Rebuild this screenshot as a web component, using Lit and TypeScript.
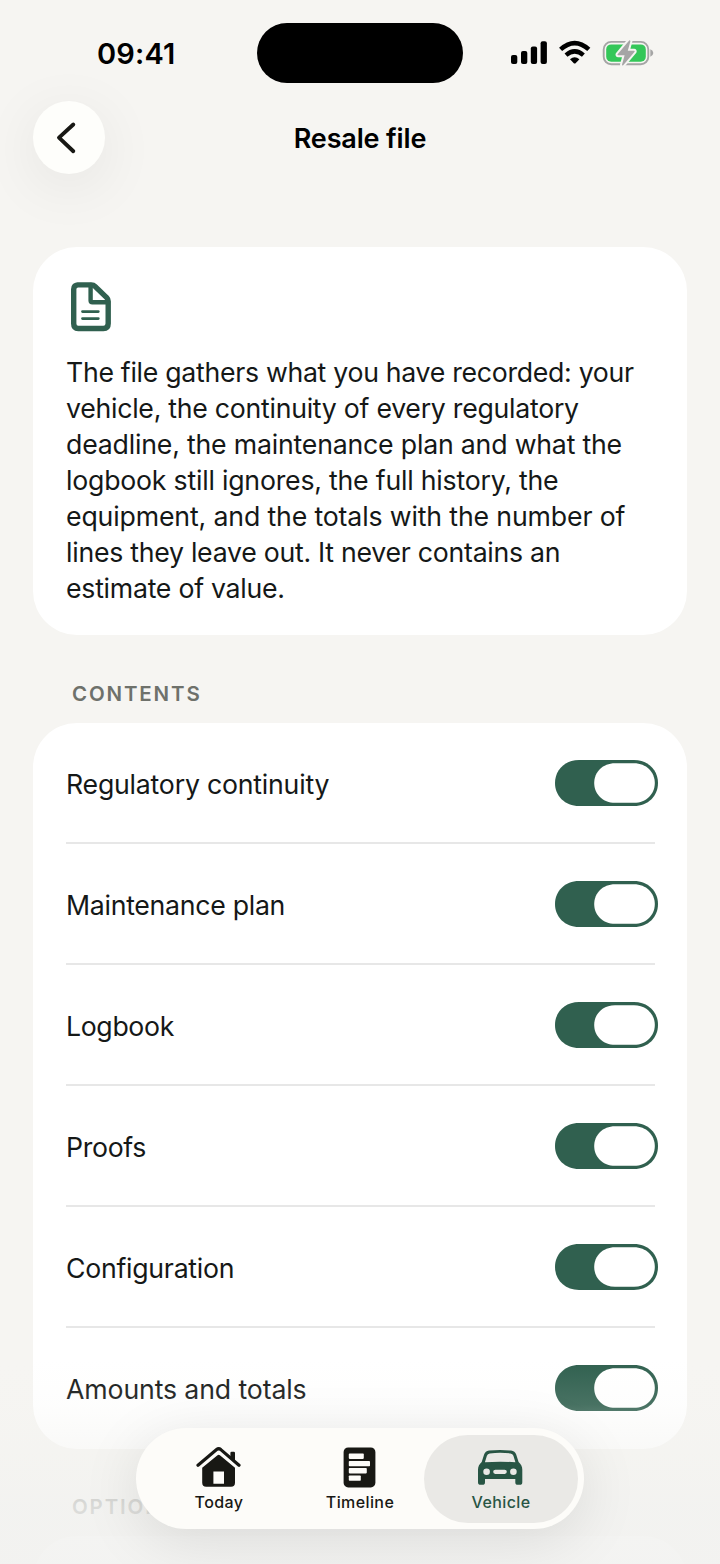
import { LitElement, html, css, svg } from "lit";
import { customElement, property } from "lit/decorators.js";
import { classMap } from "lit/directives/class-map.js";

const introLines = [
  { text: "The file gathers what you have recorded: your", spacing: -0.3 },
  { text: "vehicle, the continuity of every regulatory", spacing: -0.27 },
  { text: "deadline, the maintenance plan and what the", spacing: -0.2 },
  { text: "logbook still ignores, the full history, the", spacing: -0.22 },
  { text: "equipment, and the totals with the number of", spacing: -0.15 },
  { text: "lines they leave out. It never contains an", spacing: -0.27 },
  { text: "estimate of value.", spacing: -0.26 },
];

const rows = [
  { text: "Regulatory continuity", spacing: -0.22 },
  { text: "Maintenance plan", spacing: -0.29 },
  { text: "Logbook", spacing: -0.36 },
  { text: "Proofs", spacing: -0.33 },
  { text: "Configuration", spacing: -0.27 },
  { text: "Amounts and totals", spacing: -0.13 },
];

const homeIcon = svg`
  <path d="M2 19.200 L20.600 3.600 Q22.700 1.900 24.800 3.600 L43 19.200" fill="none" stroke="currentColor" stroke-width="3.200" stroke-linecap="round" stroke-linejoin="round"/>
  <path d="M34.400 7 Q34.400 5.800 35.600 5.800 H37.800 Q39 5.800 39 7 V15.600 L34.400 11.600 Z" fill="currentColor"/>
  <path fill-rule="evenodd" d="M6.200 21.800 L21.500 9.200 Q22.700 8.200 23.900 9.200 L39 21.800 V36.800 Q39 40.800 35 40.800 H10.200 Q6.200 40.800 6.200 36.800 Z M17.400 25.400 V37.800 H28 V25.400 Z" fill="currentColor"/>`;

const timelineIcon = svg`
  <rect x="6.600" y="1.400" width="31.800" height="40" rx="4.600" fill="currentColor"/>
  <g fill="#fdfcf9">
    <rect x="11.800" y="7.600" width="15" height="5.300" rx=".8"/>
    <rect x="11.800" y="14.900" width="21.200" height="5.300" rx=".8"/>
    <rect x="11.800" y="22.100" width="18" height="5.300" rx=".8"/>
    <rect x="11.800" y="29.500" width="12" height="5.300" rx=".8"/>
  </g>`;

const carIcon = svg`
  <path fill-rule="evenodd" d="M11 4.600 Q22 3.200 33 4.600 Q37 5.200 38.200 8.600 L40.600 16 Q44.300 19.200 44.300 23.600 V36.200 Q44.300 38.800 41.700 38.800 H39.900 Q37.300 38.800 37.300 36.200 V33 H7 V36.200 Q7 38.800 4.400 38.800 H2.600 Q0 38.800 0 36.200 V23.600 Q0 19.200 3.700 16 L6.100 8.600 Q7.300 5.200 11 4.600 Z M11.800 7.400 Q9.600 7.700 8.900 9.800 L6.900 16.200 Q22.100 15.200 37.400 16.200 L35.400 9.800 Q34.700 7.700 32.500 7.400 Q22.100 6.300 11.800 7.400 Z M8.600 22.500 A3.300 3.300 0 1 0 8.600 29.100 A3.300 3.300 0 1 0 8.600 22.500 Z M35.400 22.500 A3.300 3.300 0 1 0 35.400 29.100 A3.300 3.300 0 1 0 35.400 22.500 Z M17.300 23.700 Q15.200 23.700 15.200 25.800 Q15.200 27.900 17.300 27.900 H26.700 Q28.800 27.900 28.800 25.800 Q28.800 23.700 26.700 23.700 Z" fill="currentColor"/>`;

const tabs = [
  { id: "today", label: "Today", icon: homeIcon },
  { id: "timeline", label: "Timeline", icon: timelineIcon },
  { id: "vehicle", label: "Vehicle", icon: carIcon },
];

@customElement("toggle-switch")
class ToggleSwitch extends LitElement {
  static styles = css`
    :host { display: block; width: 103px; height: 46px; }
    .toggle { display: block; }
  `;
  render() {
    return html`<svg class="toggle" width="103" height="46" viewBox="0 0 103 46">
      <path d="M24 0 H79 C93 0 103 10 103 23 C103 36 93 46 79 46 H24 C10 46 0 36 0 23 C0 10 10 0 24 0 Z" fill="#30604f"/>
      <path d="M60 3.200 H79 C91.300 3.200 99.800 12 99.800 23 C99.800 34 91.300 42.800 79 42.800 H60 C47.700 42.800 39.200 34 39.200 23 C39.200 12 47.700 3.200 60 3.200 Z" fill="#fff"/>
    </svg>`;
  }
}

@customElement("tab-bar")
class TabBar extends LitElement {
  @property() selected = "vehicle";
  static styles = css`
    :host {
      display: flex; box-sizing: border-box; width: 448px; height: 101px; padding: 7px 6px;
      border-radius: 51px; background: #fdfcf9;
      box-shadow: 0 12px 60px rgba(0, 0, 0, 0.1);
      font-family: Inter, "Liberation Sans", sans-serif;
    }
    .bar { display: grid; grid-template-columns: 154px 128px 154px; width: 100%; height: 88px; }
    .tab {
      display: flex; flex-direction: column; align-items: center; box-sizing: border-box;
      padding-top: 11px; border-radius: 44px; color: #181814;
    }
    .tab.active { background: #eae9e6; color: #285544; }
    .glyph { display: block; }
    .label { font-size: 16px; line-height: 20px; margin-top: 4px; font-weight: 500; letter-spacing: 0.4px; }
  `;
  render() {
    return html`<nav class="bar">
      ${tabs.map((t) => html`<div class=${classMap({ tab: true, active: t.id === this.selected })}>
        <svg class="glyph" width="46" height="42" viewBox="0 0 46 42">${t.icon}</svg>
        <span class="label">${t.label}</span>
      </div>`)}
    </nav>`;
  }
}

@customElement("app-root")
class AppRoot extends LitElement {
  static styles = css`
    :host {
      display: block; position: relative; width: 720px; height: 1564px; overflow: hidden;
      background: #f6f5f2; color: #151817;
      font-family: Inter, "Liberation Sans", sans-serif;
    }
    .status {
      display: grid; grid-template-columns: 257px 206px 257px; box-sizing: border-box;
      height: 101px; padding-top: 23px; color: #000;
    }
    .time { padding-left: 97px; font-size: 29px; line-height: 62px; font-weight: 560; letter-spacing: 0.2px; }
    .island { height: 60px; border-radius: 30px; background: #000; }
    .indicators { display: block; margin-left: 47px; }
    .header { display: grid; grid-template-columns: 72px 1fr 72px; height: 146px; padding: 0 33px; }
    .back {
      display: block; width: 72px; height: 72.500px; border-radius: 50%; background: #fefefb;
      box-shadow: 0 12px 60px rgba(0, 0, 0, 0.075);
    }
    .title { margin: 0; text-align: center; font-size: 27px; line-height: 75px; font-weight: 580; color: #000; letter-spacing: -0.15px; }
    .card { margin: 0 33px; border-radius: 44px; background: #fff; }
    .intro { box-sizing: border-box; height: 388px; padding: 33px 33px 0; }
    .doc { display: block; margin-bottom: 18px; }
    .line { display: block; width: max-content; font-size: 26.7px; line-height: 36px; }
    .section { margin: 0; padding: 0 72px; font-size: 20.500px; font-weight: 600; line-height: 26px; color: #6e716b; letter-spacing: 1.850px; }
    .contents { margin-top: 46px; margin-bottom: 16px; }
    .options { margin-top: 45px; margin-bottom: 16px; }
    .row { display: flex; align-items: center; justify-content: space-between; position: relative; box-sizing: border-box; height: 121px; padding: 0 29px 2px 33px; }
    .row:not(:last-child)::after { content: ""; position: absolute; left: 33px; right: 32px; bottom: 0; height: 2px; background: #e7e7e7; }
    .name { font-size: 26.7px; line-height: 36px; margin-top: 2px; }
    .below { height: 100px; }
    .fade {
      position: absolute; left: 0; right: 0; bottom: 0; height: 204px;
      background: linear-gradient(rgba(243, 243, 240, 0), rgba(243, 243, 240, 0.120) 22%, rgba(243, 243, 240, 0.600) 50%, rgba(242, 242, 240, 0.820) 72%, rgba(242, 242, 240, 0.900));
    }
    .tabs { position: absolute; left: 136px; top: 1428px; }
  `;
  render() {
    return html`
      <div class="status">
        <span class="time">09:41</span>
        <div class="island"></div>
        <svg class="indicators" width="146" height="60" viewBox="0 0 146 60">
          <g>
            <rect x="1" y="32" width="6.300" height="9" rx="2"/>
            <rect x="11" y="28" width="6.300" height="13" rx="2"/>
            <rect x="20.800" y="23.400" width="6.300" height="17.600" rx="2"/>
            <rect x="30.600" y="18.200" width="6.300" height="22.800" rx="2"/>
          </g>
          <g fill="none" stroke="#000">
            <path d="M50.600 26.400 Q64.700 13.800 78.800 26.400" stroke-width="4.600"/>
            <path d="M56 32.200 Q64.700 24.600 73.400 32.200" stroke-width="4.400"/>
          </g>
          <path d="M60 36.200 Q64.700 32.400 69.400 36.200 L65.600 40.200 Q64.700 41 63.800 40.200 Z"/>
          <rect x="93.700" y="18.900" width="44.600" height="22.300" rx="7.500" fill="none" stroke="#a5a5a5" stroke-width="1.900"/>
          <path d="M140.300 26.200 Q143.300 27.400 143.300 30 Q143.300 32.600 140.300 33.800 Z" fill="#a5a5a5"/>
          <rect x="96.200" y="21.400" width="39.600" height="17.300" rx="5" fill="#34c759"/>
          <path d="M119.200 17.400 L107.600 31.200 Q107.200 32.200 108.200 32.200 H114.600 L112 41.800 Q112.200 43 113.200 42.200 L124.600 28.800 Q125 27.800 124 27.800 H117.800 L120.400 18.200 Q120.200 17 119.200 17.400 Z" fill="#a5a5a5" stroke="#f6f5f2" stroke-width="4" paint-order="stroke" stroke-linejoin="round"/>
        </svg>
      </div>
      <header class="header">
        <svg class="back" viewBox="0 0 72 72">
          <path d="M40.300 23.200 L26 36.400 L40.300 50" fill="none" stroke="#181814" stroke-width="3.900" stroke-linecap="round" stroke-linejoin="round"/>
        </svg>
        <h1 class="title">Resale file</h1>
      </header>
      <section class="card intro">
        <svg class="doc" width="50" height="56" viewBox="0 0 50 56" fill="none" stroke="#30604f" stroke-linejoin="round" stroke-linecap="round">
          <path d="M11.500 4.900 H25.500 Q27.500 4.900 29 6.400 L40.700 17.600 Q42.200 19.200 42.200 21.200 V43.500 Q42.200 48.500 37.400 48.500 H12.200 Q7.700 48.500 7.700 43.500 V9.200 Q7.700 4.900 12.200 4.900 Z" stroke-width="5.400"/>
          <path d="M24.600 5 V20.500 Q24.600 22.200 26.400 22.200 H42" stroke-width="4.400"/>
          <path d="M16.500 31.600 H32.300 M16.500 38.600 H32.300" stroke-width="2.800"/>
        </svg>
        ${introLines.map((l) => html`<span class="line" style="letter-spacing:${l.spacing}px">${l.text}</span>`)}
      </section>
      <h2 class="section contents">CONTENTS</h2>
      <section class="card">
        ${rows.map((r) => html`<div class="row">
          <span class="name" style="letter-spacing:${r.spacing}px">${r.text}</span>
          <toggle-switch></toggle-switch>
        </div>`)}
      </section>
      <h2 class="section options">OPTIONS</h2>
      <section class="card below"></section>
      <div class="fade"></div>
      <tab-bar class="tabs" selected="vehicle"></tab-bar>
    `;
  }
}
